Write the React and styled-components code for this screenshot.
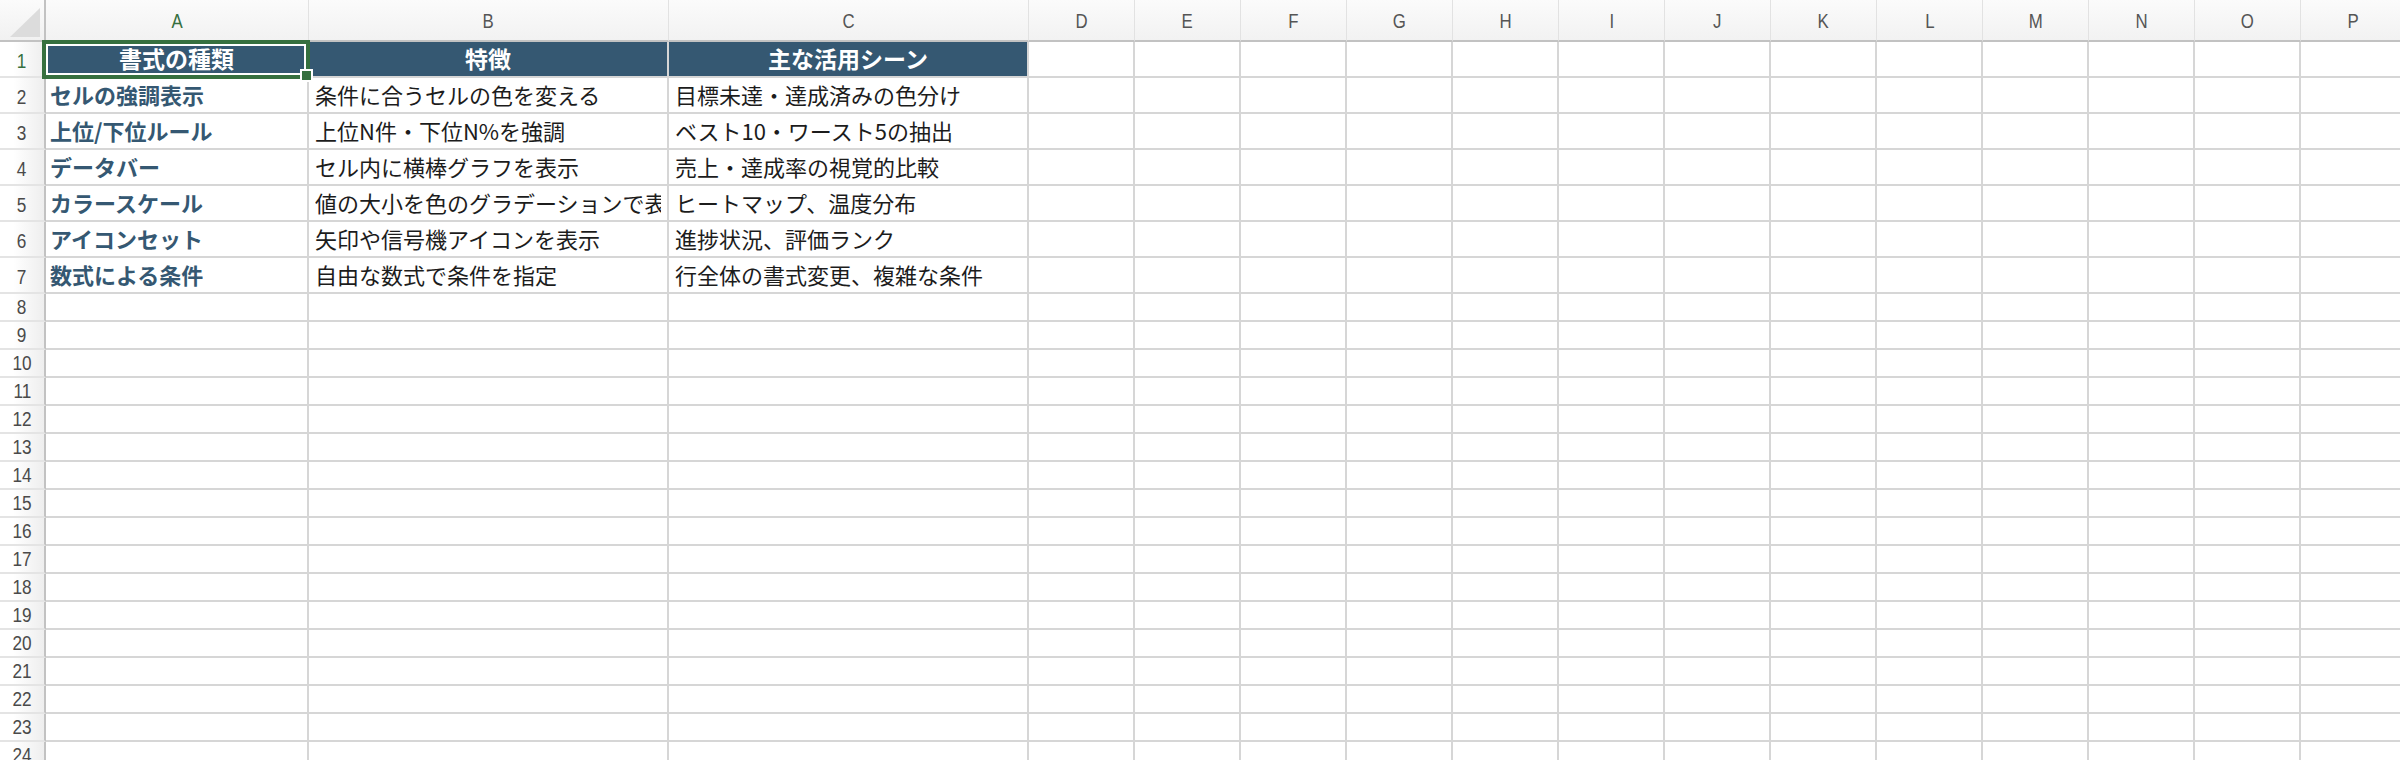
import React from 'react';
import styled, { createGlobalStyle } from 'styled-components';

const colors = {
	grid: '#d6d6d6',
	headBorder: '#c2c2c2',
	fill: '#355872',
	green: '#36703f',
	text: '#1c1c1c',
	label: '#555555',
};

const GlobalStyle = createGlobalStyle`
	html, body {
		margin: 0;
		padding: 0;
		background: #ffffff;
		overflow: hidden;
	}
	body {
		font-family: "Noto Sans CJK JP", "Noto Sans", sans-serif;
	}
`;

const COLUMNS = [
	{ key: 'A', width: 263 },
	{ key: 'B', width: 360 },
	{ key: 'C', width: 360 },
	...'DEFGHIJKLMNOP'.split('').map((key) => ({ key, width: 106 })),
];

const ROWS = [
	['書式の種類', '特徴', '主な活用シーン'],
	['セルの強調表示', '条件に合うセルの色を変える', '目標未達・達成済みの色分け'],
	['上位/下位ルール', '上位N件・下位N%を強調', 'ベスト10・ワースト5の抽出'],
	['データバー', 'セル内に横棒グラフを表示', '売上・達成率の視覚的比較'],
	['カラースケール', '値の大小を色のグラデーションで表示', 'ヒートマップ、温度分布'],
	['アイコンセット', '矢印や信号機アイコンを表示', '進捗状況、評価ランク'],
	['数式による条件', '自由な数式で条件を指定', '行全体の書式変更、複雑な条件'],
];

const ROW_COUNT = 25;

const Sheet = styled.div`
	display: grid;
	grid-template-columns: 46px ${COLUMNS.map((c) => `${c.width}px`).join(' ')};
	grid-template-rows: 42px repeat(7, 36px) repeat(${ROW_COUNT - 7}, 28px);
	width: 2400px;
	height: 760px;
	overflow: hidden;
`;

const Corner = styled.div`
	position: relative;
	background: linear-gradient(#fbfbfb, #f1f1f1);
	border-right: 2px solid ${colors.headBorder};
	border-bottom: 2px solid ${colors.headBorder};
	box-sizing: border-box;
	.triangle {
		position: absolute;
		left: 10px;
		top: 8px;
		width: 30px;
		height: 29px;
		background: #dcdcdc;
		clip-path: polygon(100% 0, 100% 100%, 0 100%);
	}
`;

const ColHead = styled.div`
	display: flex;
	align-items: center;
	justify-content: center;
	background: linear-gradient(#fbfbfb, #f2f2f2);
	border-right: 1px solid #e2e2e2;
	border-bottom: 2px solid ${colors.headBorder};
	box-sizing: border-box;
	font-family: "Liberation Sans", Arial, sans-serif;
	font-size: 21px;
	line-height: 1.3;
	color: ${(p) => (p.$active ? colors.green : colors.label)};
	span {
		display: inline-block;
		transform: scaleX(0.8);
		padding-top: 2px;
	}
`;

const RowHead = styled.div`
	display: flex;
	align-items: flex-end;
	justify-content: center;
	padding-bottom: ${(p) => (p.$tall ? '3px' : '1px')};
	background: linear-gradient(to right, #ffffff 30%, #eeeeee);
	border-right: 2px solid ${colors.headBorder};
	border-bottom: 2px solid #e4e4e4;
	box-sizing: border-box;
	font-family: "Liberation Sans", Arial, sans-serif;
	font-size: 20px;
	line-height: 1.2;
	color: ${(p) => (p.$active ? colors.green : '#4a4a4a')};
	span {
		display: inline-block;
		transform: scaleX(0.86);
	}
`;

const Cell = styled.div`
	position: relative;
	z-index: ${(p) => (p.$selected ? 2 : 0)};
	display: flex;
	align-items: center;
	justify-content: ${(p) => (p.$head ? 'center' : 'flex-start')};
	min-width: 0;
	padding: 0 ${(p) => (p.$first ? '4px' : '6px')};
	background: ${(p) => (p.$head ? colors.fill : '#ffffff')};
	border-right: 2px solid ${colors.grid};
	border-bottom: 2px solid ${colors.grid};
	box-sizing: border-box;
	font-size: ${(p) => (p.$head ? '23px' : '22px')};
	font-weight: ${(p) => (p.$head || p.$first ? 700 : 400)};
	color: ${(p) => (p.$head ? '#ffffff' : p.$first ? colors.fill : colors.text)};
`;

const CellText = styled.span`
	display: block;
	overflow: hidden;
	white-space: nowrap;
	line-height: 1.45;
`;

const Selection = styled.div`
	position: absolute;
	left: -4px;
	top: -2px;
	right: -3px;
	bottom: -3px;
	border: 4px solid ${colors.green};
	box-shadow: inset 0 0 0 2px #ffffff;
	pointer-events: none;
	.handle {
		position: absolute;
		right: -7px;
		bottom: -7px;
		width: 9px;
		height: 9px;
		background: ${colors.green};
		border: 2px solid #ffffff;
	}
`;

const App = () => {
	return (
		<>
			<GlobalStyle />
			<Sheet>
				<Corner>
					<div className='triangle' />
				</Corner>
				{COLUMNS.map((col) => (
					<ColHead key={col.key} $active={col.key === 'A'}>
						<span>{col.key}</span>
					</ColHead>
				))}
				{Array.from({ length: ROW_COUNT }, (_, r) => (
					<React.Fragment key={r}>
						<RowHead $active={r === 0} $tall={r < 7}>
							<span>{r + 1}</span>
						</RowHead>
						{COLUMNS.map((col, c) => {
							const value = ROWS[r] ? ROWS[r][c] : undefined;
							const selected = r === 0 && c === 0;
							return (
								<Cell
									key={col.key}
									$head={r === 0 && c < 3}
									$first={r > 0 && c === 0}
									$selected={selected}
								>
									{value && <CellText>{value}</CellText>}
									{selected && (
										<Selection>
											<div className='handle' />
										</Selection>
									)}
								</Cell>
							);
						})}
					</React.Fragment>
				))}
			</Sheet>
		</>
	);
};

export default App;
